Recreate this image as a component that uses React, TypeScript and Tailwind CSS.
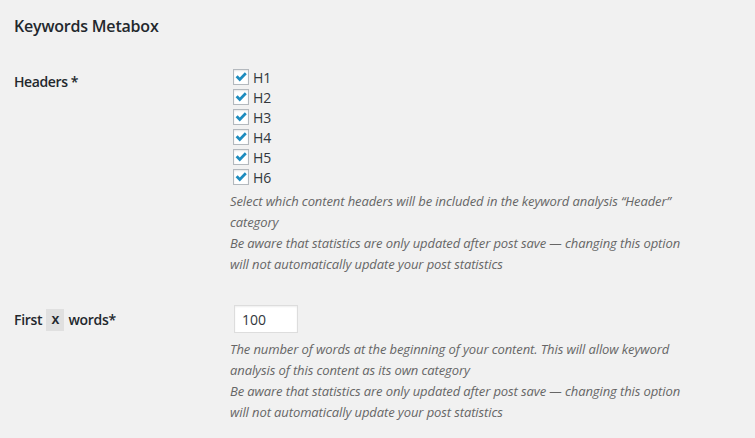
import React from "react";

const headers = ["H1", "H2", "H3", "H4", "H5", "H6"];

const Check = () => (
  <span className="flex h-4 w-4 shrink-0 items-center justify-center border border-[#b4b9be] bg-white shadow-[inset_0_1px_2px_rgba(0,0,0,0.1)]">
    <svg viewBox="0 0 16 16" className="h-4 w-4">
      <path d="M1.8 8.4 L4.2 6.1 L6.6 8.6 L12.4 2.6 L14.6 4.8 L6.6 13 Z" fill="#1e8cbe" />
    </svg>
  </span>
);

const Note = ({ children }: { children: React.ReactNode }) => (
  <p className="text-[13px] italic leading-[21px] tracking-[-0.1px] text-[#666]">{children}</p>
);

export default function App() {
  return (
    <div
      className="min-h-[438px] w-[755px] bg-[#f1f1f1] text-[#23282d]"
      style={{ fontFamily: '"Open Sans", "Noto Sans", sans-serif' }}
    >
      <div className="px-[14px] pt-[14px]">
        <h2 className="text-[16px] font-semibold leading-[24px] tracking-[-0.2px]">Keywords Metabox</h2>

        <div className="mt-[30px] flex">
          <div className="w-[219px] shrink-0 pt-[4px] text-[14px] font-semibold leading-[20px] tracking-[-0.4px]">
            Headers *
          </div>
          <div className="-mt-[1px]">
            <div className="flex flex-col">
              {headers.map((h) => (
                <label key={h} className="flex h-5 items-center gap-[4px] text-[14px] text-[#32373c]">
                  <Check />
                  <span>{h}</span>
                </label>
              ))}
            </div>
            <div className="-ml-[3px] mt-[4px] w-[468px]">
              <Note>Select which content headers will be included in the keyword analysis “Header” category</Note>
              <Note>
                Be aware that statistics are only updated after post save — changing this option will not
                automatically update your post statistics
              </Note>
            </div>
          </div>
        </div>

        <div className="mt-[30px] flex">
          <div className="flex w-[220px] shrink-0 items-center gap-[4px] self-start pt-[4px] text-[14px] font-semibold leading-[20px] tracking-[-0.3px]">
            <span>First</span>
            <code className="bg-black/[0.07] px-[5px] py-[1px] font-semibold">x</code>
            <span>words*</span>
          </div>
          <div>
            <input
              readOnly
              value="100"
              className="h-[28px] w-[64px] border border-[#ddd] bg-white px-[7px] text-[14px] text-[#32373c] shadow-[inset_0_1px_2px_rgba(0,0,0,0.07)] outline-none"
            />
            <div className="-ml-[4px] mt-[6px] w-[468px]">
              <Note>
                The number of words at the beginning of your content. This will allow keyword analysis of this
                content as its own category
              </Note>
              <Note>
                Be aware that statistics are only updated after post save — changing this option will not
                automatically update your post statistics
              </Note>
            </div>
          </div>
        </div>
      </div>
    </div>
  );
}
